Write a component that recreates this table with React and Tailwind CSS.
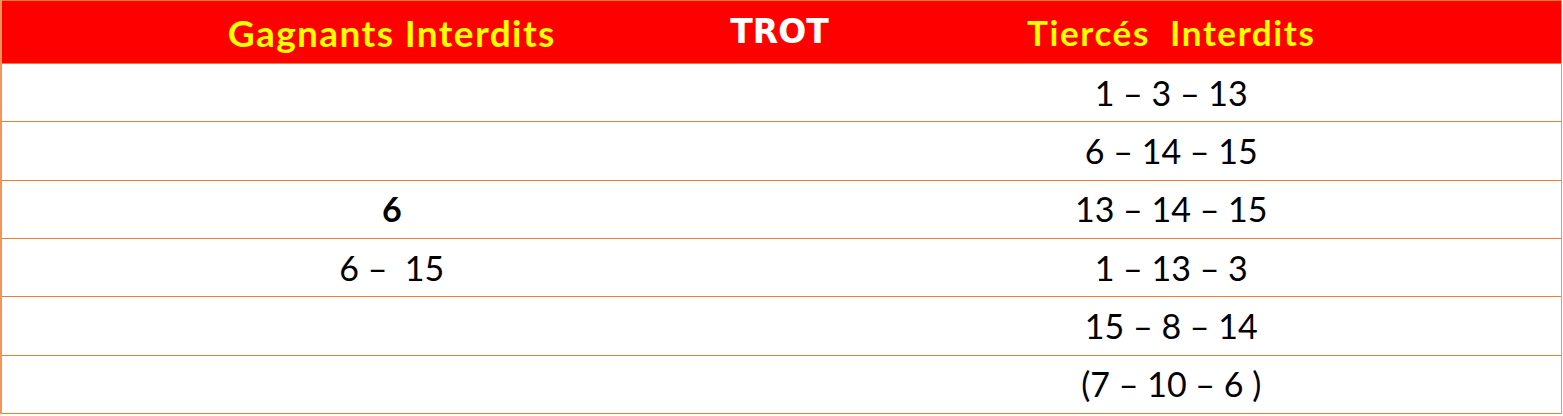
import React from "react";

const rows = [
  { left: "", bold: false, right: "1 – 3 – 13" },
  { left: "", bold: false, right: "6 – 14 – 15" },
  { left: "6", bold: true, right: "13 – 14 – 15" },
  { left: "6 –  15", bold: false, right: "1 – 13 – 3" },
  { left: "", bold: false, right: "15 – 8 – 14" },
  { left: "", bold: false, right: "(7 – 10 – 6 )" },
];

export default function App() {
  return (
    <div className="w-[1563px] h-[416px] bg-white overflow-hidden">
      <div className="w-[1562px] border-l-2 border-r border-[#f0955a] font-['Lato','Liberation_Sans',sans-serif]">
        <div className="grid grid-cols-2 h-[64px] bg-[#ff0000] border-t border-b border-[#ed7d31] items-center">
          <div className="col-start-1 row-start-1 text-center text-[#ffff00] font-bold text-[37px] leading-none tracking-[1.4px] whitespace-pre">
            Gagnants Interdits
          </div>
          <div className="col-start-2 row-start-1 text-center text-[#ffff00] font-bold text-[35px] leading-none tracking-[1.6px] whitespace-pre">
            {"Tiercés  Interdits"}
          </div>
          <div className="col-start-1 col-span-2 row-start-1 justify-self-center text-white font-bold text-[33px] leading-none font-['DejaVu_Sans',sans-serif] -translate-x-[2px] -translate-y-[1px]">
            TROT
          </div>
        </div>
        {rows.map((r, i) => (
          <div
            key={i}
            className="grid grid-cols-2 h-[58.33px] border-b border-[#ed7d31] items-center text-black text-[34px] leading-none"
          >
            <div className={"text-center whitespace-pre " + (r.bold ? "font-bold" : "")}>
              {r.left}
            </div>
            <div className="text-center whitespace-pre">{r.right}</div>
          </div>
        ))}
      </div>
    </div>
  );
}
